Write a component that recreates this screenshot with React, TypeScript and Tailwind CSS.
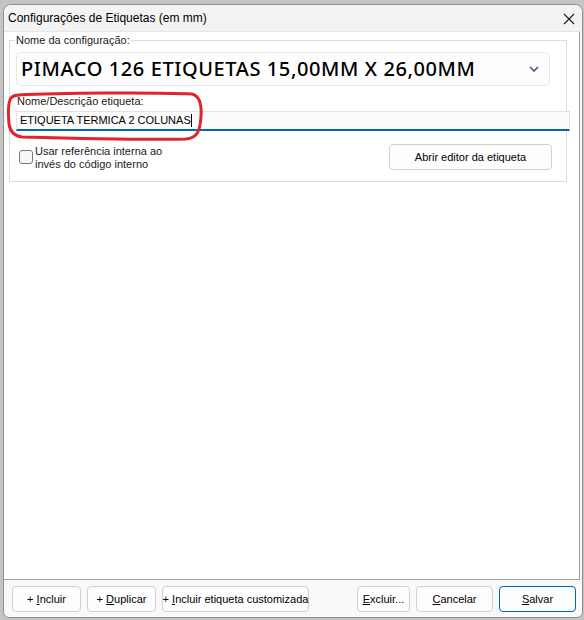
const Btn = ({ children, w, primary }: { children: React.ReactNode; w: string; primary?: boolean }) => (
    <button
        className={`${w} h-[26px] rounded-[4px] border ${primary ? "border-[#0067c0]" : "border-[#d0d0d0]"} bg-[#fdfdfd] text-[11px] leading-[13px] text-black flex items-center justify-center`}
    >
        <span className="whitespace-pre">{children}</span>
    </button>
);

const App = () => {
    return (
        <div className="relative w-[584px] h-[620px] bg-[#c4c4c4] pt-[4px] pl-[3px] pr-[1px] pb-[2px] font-['Liberation_Sans',Arial,sans-serif]">
            <div className="h-full flex flex-col rounded-t-[8px] rounded-b-[6px] border border-[#8e8e8e] overflow-hidden bg-[#f9f9f9]">
                {/* title bar */}
                <div className="h-[26px] shrink-0 bg-[#f3f3f3] flex items-center justify-between pl-[4px] pr-[5px]">
                    <span className="text-[12px] text-black">Configurações de Etiquetas (em mm)</span>
                    <svg width="12" height="12" viewBox="0 0 12 12" className="mt-[1px] mr-[2px]">
                        <path d="M1 1 L11 11 M11 1 L1 11" stroke="#1a1a1a" strokeWidth="1.1" />
                    </svg>
                </div>

                {/* panel */}
                <div className="flex-1 bg-white border-t border-t-[#e6e6e6] border-r border-b border-[#a0a0a0] mr-[2px]">
                    <fieldset className="ml-[5px] mt-[2px] w-[558px] min-w-0 border border-[#dcdcdc] pl-[5px] pr-[5px] pb-[10px] text-[11px] leading-[13px]">
                        <legend className="px-[1px] text-[11px] leading-[13px] text-[#1a1a1a]">Nome da configuração:</legend>
                        <div className="ml-[1px] mt-[5px] w-[534px] h-[34px] rounded-[5px] border border-[#e8e8e8] bg-[#fefefe] flex items-center justify-between pl-[4px] pr-[10px]">
                            <span className="font-['Noto_Sans',sans-serif] font-medium text-[20px] tracking-[0.6px] text-black leading-none">
                                PIMACO 126 ETIQUETAS 15,00MM X 26,00MM
                            </span>
                            <svg width="10" height="6" viewBox="0 0 10 6">
                                <path d="M1 1 L5 5 L9 1" stroke="#3d4f86" strokeWidth="1.6" fill="none" />
                            </svg>
                        </div>
                        <div className="ml-[2px] mt-[9px] text-[#1a1a1a]">Nome/Descrição etiqueta:</div>
                        <div className="ml-[1px] mt-[3px] w-[554px] h-[20px] bg-[#fbfbfb] border border-[#e3e3e3] border-b-2 border-b-[#0067c0] flex items-center pl-[3px]">
                            <span className="text-black">ETIQUETA TERMICA 2 COLUNAS</span>
                            <span className="inline-block w-[1px] h-[13px] bg-black" />
                        </div>
                        <div className="mt-[13px] flex items-start justify-between">
                            <div className="flex items-start ml-[4px] mt-[1px]">
                                <div className="mt-[5px] w-[14px] h-[14px] rounded-[3px] border border-[#7a7a7a] bg-[#f7f7f7]" />
                                <div className="ml-[2px] text-[#1a1a1a]">
                                    Usar referência interna ao
                                    <br />
                                    invés do código interno
                                </div>
                            </div>
                            <div className="mr-[9px]">
                                <Btn w="w-[163px] h-[25px]">Abrir editor da etiqueta</Btn>
                            </div>
                        </div>
                    </fieldset>
                </div>

                {/* footer */}
                <div className="h-[37px] shrink-0 flex items-start justify-between pt-[6px] pl-[8px] pr-[6px]">
                    <div className="flex gap-[6px]">
                        <Btn w="w-[69px]">+ <u>I</u>ncluir</Btn>
                        <Btn w="w-[69px]">+ <u>D</u>uplicar</Btn>
                        <Btn w="w-[147px]">+ <u>I</u>ncluir etiqueta customizada</Btn>
                    </div>
                    <div className="flex gap-[6px]">
                        <Btn w="w-[53px]"><u>E</u>xcluir...</Btn>
                        <Btn w="w-[77px]"><u>C</u>ancelar</Btn>
                        <Btn w="w-[77px]" primary><u>S</u>alvar</Btn>
                    </div>
                </div>
            </div>

            {/* red hand-drawn mark */}
            <svg className="absolute left-0 top-0 pointer-events-none" width="584" height="620">
                <path
                    d="M 18 95 C 60 93, 150 92, 192 94 C 200 96, 202 104, 201 117 C 200 130, 198 138, 186 139 C 150 140, 60 138, 22 137 C 13 136, 10 131, 9 124 C 8 112, 8 100, 12 97 C 14 95.5, 16 95, 20 95"
                    stroke="#e0252b"
                    strokeWidth="3"
                    fill="none"
                    strokeLinecap="round"
                />
            </svg>
        </div>
    );
};

export default App;
